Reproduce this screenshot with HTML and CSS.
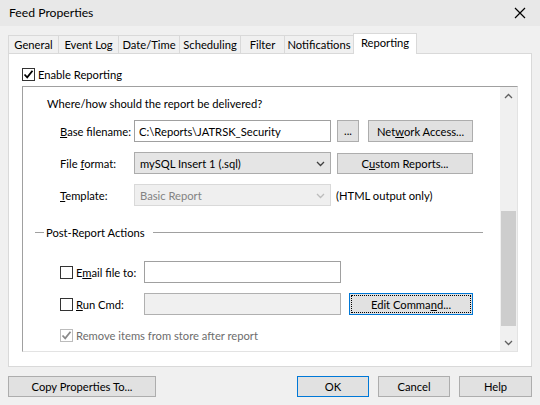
FILE: index.html
```html
<!DOCTYPE html>
<html>
<head>
<meta charset="utf-8">
<link rel="stylesheet" href="styles.css">
</head>
<body>
<div class="window">
  <div class="titlebar">
    <span class="title">Feed Properties</span>
    <svg class="close" width="12" height="12" viewBox="0 0 12 12"><path d="M1 1L11 11M11 1L1 11" stroke="#000" stroke-width="1.2" fill="none"/></svg>
  </div>
  <div class="tabs">
    <div class="tab t-general">General</div>
    <div class="tab t-event">Event Log</div>
    <div class="tab t-date">Date/Time</div>
    <div class="tab t-sched">Scheduling</div>
    <div class="tab t-filter">Filter</div>
    <div class="tab t-notif">Notifications</div>
    <div class="tab tab-active">Reporting</div>
  </div>
  <div class="panel">
    <div class="enable-row">
      <span class="check"><svg width="11" height="11" viewBox="0 0 11 11"><path d="M1.5 5.5L4.2 8.3L9.5 1.8" stroke="#000" stroke-width="1.8" fill="none"/></svg></span>
      <span class="lbl">Enable Reporting</span>
    </div>
    <div class="inner">
      <div class="content">
        <div class="heading">Where/how should the report be delivered?</div>
        <div class="row row1">
          <span class="label"><u>B</u>ase filename:</span>
          <span class="input">C:\Reports\JATRSK_Security</span>
          <span class="btn btn-dots">...</span>
          <span class="btn btn-net">Net<u>w</u>ork Access...</span>
        </div>
        <div class="row row2">
          <span class="label">File <u>f</u>ormat:</span>
          <span class="select">mySQL Insert 1 (.sql)<svg class="arrow" width="9" height="6" viewBox="0 0 9 6"><path d="M1 1L4.5 4.5L8 1" stroke="#404040" stroke-width="1.3" fill="none"/></svg></span>
          <span class="btn btn-custom">C<u>u</u>stom Reports...</span>
        </div>
        <div class="row row3">
          <span class="label"><u>T</u>emplate:</span>
          <span class="select select-dis">Basic Report<svg class="arrow" width="9" height="6" viewBox="0 0 9 6"><path d="M1 1L4.5 4.5L8 1" stroke="#bcbcbc" stroke-width="1.3" fill="none"/></svg></span>
          <span class="note">(HTML output only)</span>
        </div>
        <div class="group">
          <span class="gline gline-short"></span>
          <span class="gtitle">Post-Report Actions</span>
          <span class="gline gline-long"></span>
        </div>
        <div class="row row4">
          <span class="cblabel"><span class="check"></span><span class="lbl">E<u>m</u>ail file to:</span></span>
          <span class="input input-wide"></span>
        </div>
        <div class="row row5">
          <span class="cblabel"><span class="check"></span><span class="lbl"><u>R</u>un Cmd:</span></span>
          <span class="input input-wide input-dis"></span>
          <span class="btn btn-edit"><span class="focus">Edit Comma<u>n</u>d...</span></span>
        </div>
        <div class="row row6">
          <span class="check check-dis"><svg width="11" height="11" viewBox="0 0 11 11"><path d="M1.5 5.5L4.2 8.3L9.5 1.8" stroke="#8a8a8a" stroke-width="1.8" fill="none"/></svg></span>
          <span class="lbl dis">Remove items from store after report</span>
        </div>
      </div>
      <div class="scrollbar">
        <svg class="sarrow" width="9" height="6" viewBox="0 0 9 6"><path d="M1 5L4.5 1.5L8 5" stroke="#606060" stroke-width="1.3" fill="none"/></svg>
        <div class="track"><div class="thumb"></div></div>
        <svg class="sarrow" width="9" height="6" viewBox="0 0 9 6"><path d="M1 1L4.5 4.5L8 1" stroke="#606060" stroke-width="1.3" fill="none"/></svg>
      </div>
    </div>
  </div>
  <div class="footer">
    <span class="btn btn-copy">Copy Properties To...</span>
    <span class="spacer"></span>
    <span class="btn btn-foot btn-default">OK</span>
    <span class="btn btn-foot">Cancel</span>
    <span class="btn btn-foot btn-help">Help</span>
  </div>
</div>
</body>
</html>
```
FILE: styles.css
```css
* { box-sizing: border-box; }
html, body { margin: 0; padding: 0; }
body {
  width: 540px;
  height: 405px;
  background: #f0f0f0;
  font-family: Lato, "Noto Sans", sans-serif;
  font-size: 11.2px;
  color: #000;
  overflow: hidden;
  white-space: nowrap;
}
u { text-decoration: underline; text-underline-offset: 1px; }
.window { width: 540px; height: 405px; }
.titlebar {
  height: 26px;
  background: #e8e8e8;
  display: flex;
  align-items: center;
  justify-content: space-between;
  padding: 0 14px 0 9px;
}
.title { font-size: 12.2px; color: #000; margin-top: -1px; }
.close { display: block; }
.tabs {
  display: flex;
  align-items: flex-end;
  height: 27px;
  padding-left: 8px;
  position: relative;
  z-index: 2;
}
.tab {
  height: 18px;
  border: 1px solid #d9d9d9;
  border-bottom: none;
  background: #f0f0f0;
  margin-right: -1px;
  display: flex;
  align-items: center;
  justify-content: center;
  line-height: 1;
  padding-top: 1px;
}
.t-general { width: 51px; }
.t-event { width: 61px; }
.t-date { width: 62px; }
.t-sched { width: 62px; }
.t-filter { width: 45px; }
.t-notif { width: 70px; }
.tab-active {
  width: 64px;
  height: 21px;
  background: #fff;
  margin-bottom: -1px;
  align-items: flex-start;
  padding-top: 3px;
}
.panel {
  margin-left: 8px;
  width: 524px;
  height: 314px;
  border: 1px solid #d9d9d9;
  background: #fff;
  padding: 13px 0 0 13px;
  position: relative;
  z-index: 1;
}
.enable-row { display: flex; align-items: center; height: 14px; }
.check {
  width: 13px;
  height: 13px;
  border: 1px solid #333;
  background: #fff;
  display: inline-flex;
  align-items: center;
  justify-content: center;
  flex: none;
}
.check svg { display: block; }
.check-dis { border-color: #bcbcbc; background: #fff; }
.lbl { margin-left: 3px; }
.dis { color: #6d6d6d; }
.inner {
  margin-top: 5px;
  width: 496px;
  height: 266px;
  border-top: 1px solid #a0a0a0;
  border-left: 1px solid #a0a0a0;
  border-right: 1px solid #e3e3e3;
  border-bottom: 1px solid #e3e3e3;
  display: flex;
}
.content { flex: 1; padding-left: 24px; }
.heading { height: 16px; line-height: 16px; margin-top: 9px; }
.row { display: flex; align-items: center; height: 22px; padding-left: 13px; }
.row1 { margin-top: 8px; }
.row2 { margin-top: 10px; }
.row3 { margin-top: 10px; }
.row4 { margin-top: 22px; }
.row5 { margin-top: 10px; }
.row6 { margin-top: 12px; height: 16px; }
.label { width: 74px; flex: none; }
.input {
  width: 197px;
  height: 22px;
  border: 1px solid #a0a0a0;
  background: #fff;
  display: flex;
  align-items: center;
  padding-left: 4px;
  flex: none;
}
.input-dis { background: #f0f0f0; border-color: #b0b0b0; }
.btn {
  height: 22px;
  border: 1px solid #adadad;
  background: #e1e1e1;
  display: inline-flex;
  align-items: center;
  justify-content: center;
  flex: none;
}
.btn-dots { width: 22px; margin-left: 6px; padding-bottom: 1px; }
.btn-net { width: 105px; margin-left: 9px; }
.select {
  width: 197px;
  height: 22px;
  border: 1px solid #acacac;
  background: #e5e5e5;
  display: flex;
  align-items: center;
  padding-left: 5px;
  position: relative;
  flex: none;
}
.select .arrow { position: absolute; right: 5px; top: 8px; }
.select-dis { background: #efefef; border-color: #d9d9d9; color: #838383; }
.btn-custom { width: 136px; margin-left: 6px; height: 21px; }
.note { margin-left: 5px; }
.group {
  display: flex;
  align-items: center;
  height: 14px;
  margin-top: 19px;
  margin-left: -12px;
  width: 448px;
}
.gline { height: 1px; background: #a0a0a0; }
.gline-short { width: 9px; }
.gtitle { margin: 0 8px 0 2px; }
.gline-long { flex: 1; }
.cblabel { display: flex; align-items: center; width: 84px; flex: none; }
.btn-edit {
  width: 124px;
  margin-left: 8px;
  border-color: #0078d7;
  padding: 1px;
}
.focus {
  width: 100%;
  height: 100%;
  border: 1px dotted #000;
  display: flex;
  align-items: center;
  justify-content: center;
}
.scrollbar {
  width: 17px;
  background: #f0f0f0;
  display: flex;
  flex-direction: column;
  align-items: center;
}
.sarrow { display: block; margin: 6px 0 5px; flex: none; }
.track { flex: 1; width: 100%; position: relative; }
.thumb { position: absolute; left: 1px; right: 1px; top: 107px; height: 115px; background: #cdcdcd; }
.footer {
  display: flex;
  padding: 0 8px;
  margin-top: 9px;
}
.spacer { flex: 1; }
.btn-copy { width: 148px; height: 21px; }
.btn-foot { width: 72px; height: 21px; margin-left: 9px; }
.btn-help { width: 73px; }
.btn-default { border-color: #0078d7; }
```
